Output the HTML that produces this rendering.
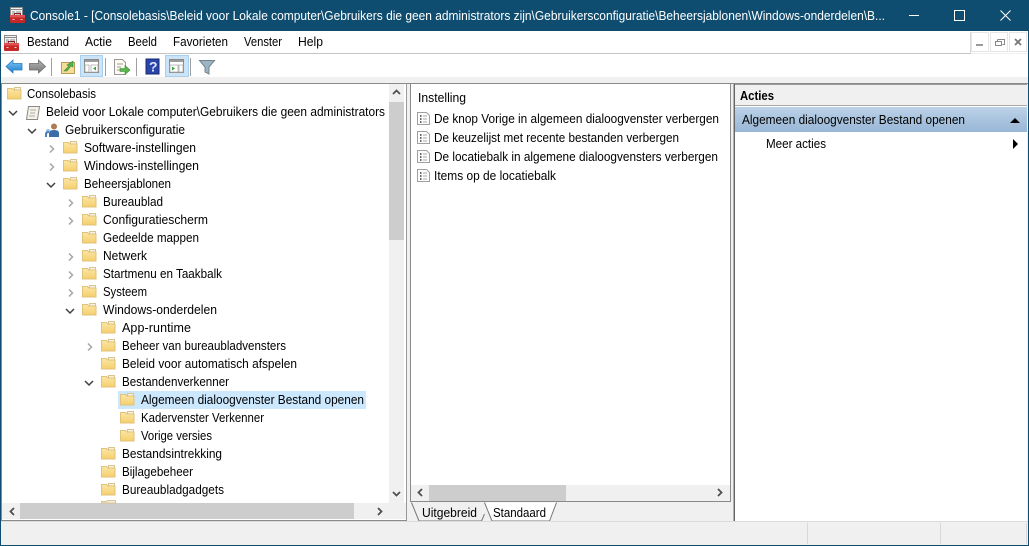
<!DOCTYPE html>
<html lang="nl"><head><meta charset="utf-8"><title>Console1</title>
<style>
html,body{margin:0;padding:0;width:1029px;height:546px;overflow:hidden;background:#f0f0f0}
svg{display:block}
text{font-family:"Liberation Sans",sans-serif;font-size:12.5px;fill:#000}
</style></head><body>
<svg xmlns="http://www.w3.org/2000/svg" width="1029" height="546" viewBox="0 0 1029 546">
<defs>
<linearGradient id="fg" x1="0" y1="0" x2="0" y2="1"><stop offset="0" stop-color="#fbe6a6"/><stop offset="1" stop-color="#f5cf6c"/></linearGradient>
<symbol id="f" viewBox="0 0 16 14" width="16" height="14" overflow="visible">
<path d="M8.500 2.500v-2h6v2" fill="#f6f1e2" stroke="#d8c48e"/>
<path d="M1.500 1.500h5l1.500 1.500h7v9h-13.500z" fill="url(#fg)" stroke="#e0c27a"/>
</symbol>
<symbol id="d" viewBox="0 0 14 16" width="14" height="16" overflow="visible">
<path d="M.5 1.500h9l3 3v9h-12z" fill="#fdfdfd" stroke="#a0a0a0"/>
<path d="M3 5h1.500M3 8h1.500M3 11h1.500" stroke="#333" stroke-width="1.400"/>
<path d="M6 5h4M6 8h4M6 11h4" stroke="#a8a8a8"/>
</symbol>
<symbol id="c" viewBox="0 0 8 10" width="8" height="10" overflow="visible"><path d="M2 1.500l3.500 3.500-3.500 3.500" fill="none" stroke="#a6a6a6" stroke-width="1.500"/></symbol>
<symbol id="o" viewBox="0 0 10 8" width="10" height="8" overflow="visible"><path d="M0 2l4 4 4-4" fill="none" stroke="#404040" stroke-width="1.500"/></symbol>
<linearGradient id="b" x1="0" y1="0" x2="0" y2="1"><stop offset="0" stop-color="#bcd2e8"/><stop offset="1" stop-color="#98b6d6"/></linearGradient>
<linearGradient id="bl" x1="0" y1="0" x2="0" y2="1"><stop offset="0" stop-color="#7cc6f4"/><stop offset="1" stop-color="#1f7fd0"/></linearGradient>
<linearGradient id="gr" x1="0" y1="0" x2="0" y2="1"><stop offset="0" stop-color="#b5b5b5"/><stop offset="1" stop-color="#777"/></linearGradient>
<symbol id="tb" viewBox="0 0 18 18" width="18" height="18" overflow="visible">
<rect x="1.500" y="1.500" width="14" height="13" fill="#fff" stroke="#8a8a8a"/>
<rect x="2" y="2" width="13" height="2" fill="#9c9c9c"/>
</symbol>
<symbol id="app" viewBox="0 0 16 16" width="16" height="16" overflow="visible">
<rect x="1.500" y="0.500" width="12" height="11" fill="#f2f2f2" stroke="#8c8c8c"/>
<path d="M2 2.500h11M3 5h3M7 5h5M3 7h3M7 7h5" stroke="#8a8a8a"/>
<rect x="1" y="8" width="15" height="8" rx="1" fill="#c62828"/>
<rect x="1" y="8" width="15" height="2.500" fill="#e05050"/>
<path d="M5.500 8v-1.500h6v1.500" fill="none" stroke="#8c2020"/>
<path d="M3.500 12.500h2M11.500 12.500h2" stroke="#f4caca"/>
</symbol>
</defs>

<!-- window frame and title bar -->
<rect width="1029" height="546" fill="#0f4d70"/>
<rect x="1" y="31" width="1027" height="514" fill="#f0f0f0"/>
<use href="#app" x="9" y="7"/>
<text x="30" y="20" textLength="855" lengthAdjust="spacingAndGlyphs" style="fill:#fff">Console1 - [Consolebasis\Beleid voor Lokale computer\Gebruikers die geen administrators zijn\Gebruikersconfiguratie\Beheersjablonen\Windows-onderdelen\B...</text>
<path d="M909 15.500h10" stroke="#fff"/>
<rect x="954.500" y="10.500" width="10" height="10" fill="none" stroke="#fff"/>
<path d="M1000.500 10.500l10 10M1010.500 10.500l-10 10" stroke="#fff"/>

<!-- menu bar -->
<rect x="1" y="31" width="1027" height="22" fill="#fff"/>
<rect x="1" y="53" width="970" height="1" fill="#c4c4c4"/>
<use href="#app" x="3" y="35"/>
<text x="27" y="46" textLength="42" lengthAdjust="spacingAndGlyphs">Bestand</text>
<text x="85" y="46" textLength="27" lengthAdjust="spacingAndGlyphs">Actie</text>
<text x="128" y="46" textLength="29" lengthAdjust="spacingAndGlyphs">Beeld</text>
<text x="173" y="46" textLength="55" lengthAdjust="spacingAndGlyphs">Favorieten</text>
<text x="244" y="46" textLength="38" lengthAdjust="spacingAndGlyphs">Venster</text>
<text x="298" y="46" textLength="25" lengthAdjust="spacingAndGlyphs">Help</text>
<!-- mdi buttons -->
<path d="M970.500 32v21.500" stroke="#d8d8d8"/>
<g fill="#fff" stroke="#e6e6e6"><rect x="971.500" y="32.500" width="17" height="19"/><rect x="990.500" y="32.500" width="17" height="19"/><rect x="1009.500" y="32.500" width="17" height="19"/></g>
<rect x="976" y="44" width="7" height="2" fill="#999"/>
<path d="M997.500 39.500h7v5h-2M995.500 41.500h6v4h-6zM997.500 39.500v2" fill="none" stroke="#888"/>
<path d="M1015 39l6 6M1021 39l-6 6" stroke="#777" stroke-width="1.800"/>

<!-- toolbar -->
<rect x="1" y="54" width="1027" height="23" fill="#fff"/>
<rect x="1" y="77" width="1027" height="6" fill="#f0f0f0"/>
<rect x="1" y="83" width="1027" height="1" fill="#8a8a8a"/>
<path d="M6 66.500l7-6.500v3.500h9v6.500h-9v3z" fill="url(#bl)" stroke="#2a7cbc" stroke-width=".8"/>
<path d="M45.500 66.500l-7-6.500v3.500h-9v6.500h9v3z" fill="url(#gr)" stroke="#6a6a6a" stroke-width=".8"/>
<path d="M51.500 58v18M105.500 58v18M136.500 58v18M190.500 58v18" stroke="#a0a0a0"/>
<path d="M61.500 62.500h13v11h-13z" fill="#f6dc94" stroke="#b89c5c"/>
<path d="M64 71l5-5-2-1 6-4v6l-2-1-4 5z" fill="#55b04c" stroke="#3c8a38" stroke-width=".6"/>
<rect x="80.500" y="55.500" width="22" height="21" fill="#cce4f7" stroke="#a8d0ee"/>
<use href="#tb" x="83" y="58"/>
<path d="M85 65h4v7h-4zM91 65h7v7h-7z" fill="#fff" stroke="#aaa" stroke-width=".8"/>
<path d="M96 66.500v4l-3-2z" fill="#3aa03a"/>
<path d="M114.500 59.500h8l3 3v12h-11z" fill="#fdfbf0" stroke="#999"/>
<path d="M117 64h6M117 67h4M117 70h4" stroke="#999"/>
<path d="M120 68.500h5v-3l5 4.500-5 4.500v-3h-5z" fill="#58b84a" stroke="#3c8a38" stroke-width=".6"/>
<rect x="146" y="59" width="13" height="15" fill="#2a45a8" stroke="#1a2878"/>
<text x="149" y="71.500" style="fill:#dfe6ff;font-weight:bold;font-size:14px">?</text>
<rect x="165.500" y="55.500" width="23" height="21" fill="#cce4f7" stroke="#a8d0ee"/>
<use href="#tb" x="168" y="58"/>
<path d="M170 65h8v7h-8zM179 65h4v7h-4z" fill="#fff" stroke="#aaa" stroke-width=".8"/>
<path d="M172 66.500v4l3-2z" fill="#3aa03a"/>
<path d="M199.500 60.500h15l-5.500 6.500v7l-4-2v-5z" fill="#9db4c2" stroke="#708490"/>

<!-- left pane -->
<rect x="1" y="84" width="405" height="437" fill="#fff"/>
<rect x="1" y="84" width="1" height="437" fill="#8a8a8a"/>
<rect x="406" y="84" width="1" height="437" fill="#9a9a9a"/>
<rect x="1" y="520" width="406" height="1" fill="#8a8a8a"/>
<!-- v scrollbar -->
<rect x="389" y="84" width="15" height="419" fill="#f0f0f0"/>
<rect x="389" y="102" width="15" height="138" fill="#cdcdcd"/>
<path d="M393 94l3.500-3.500 3.500 3.500" fill="none" stroke="#505050" stroke-width="1.800"/>
<path d="M393 492l3.500 3.500 3.500-3.500" fill="none" stroke="#505050" stroke-width="1.800"/>
<!-- h scrollbar -->
<rect x="2" y="503" width="404" height="16" fill="#f0f0f0"/>
<rect x="20" y="503" width="334" height="16" fill="#cdcdcd"/>
<path d="M14 508l-3.500 3.500 3.500 3.500" fill="none" stroke="#505050" stroke-width="1.800"/>
<path d="M378 508l3.500 3.500-3.500 3.500" fill="none" stroke="#505050" stroke-width="1.800"/>

<!-- tree -->
<rect x="118" y="391" width="248" height="18" fill="#cce8ff"/>
<g transform="translate(0,1)">
<use href="#f" x="6" y="86"/>
<text x="27" y="97" textLength="69" lengthAdjust="spacingAndGlyphs">Consolebasis</text>

<use href="#o" x="9" y="108"/>
<path d="M28.500 105.500h11l-2 13h-11z" fill="#f4f2e6" stroke="#888"/>
<path d="M30 109h6M30 112h5M29 115h6" stroke="#aaa"/>
<text x="46" y="115" textLength="339" lengthAdjust="spacingAndGlyphs">Beleid voor Lokale computer\Gebruikers die geen administrators</text>

<use href="#o" x="28" y="126"/>
<circle cx="54" cy="125.500" r="3" fill="#b07a50"/>
<path d="M49 136v-4q0-3 5-3t5 3v4z" fill="#3a6ea8"/>
<circle cx="48" cy="130" r="2" fill="#98c0e0"/>
<path d="M46 136v-3q0-2 3-2" fill="none" stroke="#4a80b8" stroke-width="2"/>
<text x="65" y="133" textLength="120" lengthAdjust="spacingAndGlyphs">Gebruikersconfiguratie</text>

<use href="#c" x="48" y="143"/><use href="#f" x="62" y="140"/>
<text x="84" y="151" textLength="112" lengthAdjust="spacingAndGlyphs">Software-instellingen</text>
<use href="#c" x="48" y="161"/><use href="#f" x="62" y="158"/>
<text x="84" y="169" textLength="115" lengthAdjust="spacingAndGlyphs">Windows-instellingen</text>
<use href="#o" x="47" y="180"/><use href="#f" x="62" y="176"/>
<text x="84" y="187" textLength="87" lengthAdjust="spacingAndGlyphs">Beheersjablonen</text>

<use href="#c" x="67" y="197"/><use href="#f" x="81" y="194"/>
<text x="103" y="205" textLength="60" lengthAdjust="spacingAndGlyphs">Bureaublad</text>
<use href="#c" x="67" y="215"/><use href="#f" x="81" y="212"/>
<text x="103" y="223" textLength="105" lengthAdjust="spacingAndGlyphs">Configuratiescherm</text>
<use href="#f" x="81" y="230"/>
<text x="103" y="241" textLength="96" lengthAdjust="spacingAndGlyphs">Gedeelde mappen</text>
<use href="#c" x="67" y="251"/><use href="#f" x="81" y="248"/>
<text x="103" y="259" textLength="44" lengthAdjust="spacingAndGlyphs">Netwerk</text>
<use href="#c" x="67" y="269"/><use href="#f" x="81" y="266"/>
<text x="103" y="277" textLength="119" lengthAdjust="spacingAndGlyphs">Startmenu en Taakbalk</text>
<use href="#c" x="67" y="287"/><use href="#f" x="81" y="284"/>
<text x="103" y="295" textLength="44" lengthAdjust="spacingAndGlyphs">Systeem</text>
<use href="#o" x="66" y="306"/><use href="#f" x="81" y="302"/>
<text x="103" y="313" textLength="114" lengthAdjust="spacingAndGlyphs">Windows-onderdelen</text>

<use href="#f" x="100" y="320"/>
<text x="122" y="331" textLength="69" lengthAdjust="spacing">App-runtime</text>
<use href="#c" x="86" y="341"/><use href="#f" x="100" y="338"/>
<text x="122" y="349" textLength="164" lengthAdjust="spacingAndGlyphs">Beheer van bureaubladvensters</text>
<use href="#f" x="100" y="356"/>
<text x="122" y="367" textLength="175" lengthAdjust="spacingAndGlyphs">Beleid voor automatisch afspelen</text>
<use href="#o" x="85" y="378"/><use href="#f" x="100" y="374"/>
<text x="122" y="385" textLength="107" lengthAdjust="spacingAndGlyphs">Bestandenverkenner</text>

<use href="#f" x="119" y="392"/>
<text x="141" y="403" textLength="223" lengthAdjust="spacingAndGlyphs">Algemeen dialoogvenster Bestand openen</text>
<use href="#f" x="119" y="410"/>
<text x="141" y="421" textLength="123" lengthAdjust="spacingAndGlyphs">Kadervenster Verkenner</text>
<use href="#f" x="119" y="428"/>
<text x="141" y="439" textLength="71" lengthAdjust="spacingAndGlyphs">Vorige versies</text>

<use href="#f" x="100" y="446"/>
<text x="122" y="457" textLength="100" lengthAdjust="spacingAndGlyphs">Bestandsintrekking</text>
<use href="#f" x="100" y="464"/>
<text x="122" y="475" textLength="71" lengthAdjust="spacingAndGlyphs">Bijlagebeheer</text>
<use href="#f" x="100" y="482"/>
<text x="122" y="493" textLength="102" lengthAdjust="spacingAndGlyphs">Bureaubladgadgets</text>
</g>
<path d="M101.500 503v-1.500h5l1-1h8v2.500z" fill="#f6f1e2" stroke="#d8c48e"/>

<!-- middle pane -->
<rect x="410" y="84" width="320" height="418" fill="#fff"/>
<rect x="410" y="84" width="1" height="418" fill="#8a8a8a"/>
<rect x="730" y="84" width="1" height="418" fill="#8a8a8a"/>
<rect x="410" y="501" width="321" height="1" fill="#8a8a8a"/>
<text x="418" y="102" textLength="48" lengthAdjust="spacingAndGlyphs">Instelling</text>
<use href="#d" x="417" y="111"/>
<text x="434" y="123" textLength="285" lengthAdjust="spacingAndGlyphs">De knop Vorige in algemeen dialoogvenster verbergen</text>
<use href="#d" x="417" y="130"/>
<text x="434" y="142" textLength="245" lengthAdjust="spacingAndGlyphs">De keuzelijst met recente bestanden verbergen</text>
<use href="#d" x="417" y="149"/>
<text x="434" y="161" textLength="284" lengthAdjust="spacingAndGlyphs">De locatiebalk in algemene dialoogvensters verbergen</text>
<use href="#d" x="417" y="168"/>
<text x="434" y="180" textLength="122" lengthAdjust="spacingAndGlyphs">Items op de locatiebalk</text>
<rect x="411" y="485" width="319" height="16" fill="#f0f0f0"/>
<rect x="429" y="485" width="137" height="16" fill="#cdcdcd"/>
<path d="M422 489l-3.500 3.500 3.500 3.500" fill="none" stroke="#505050" stroke-width="1.800"/>
<path d="M718 489l3.500 3.500-3.500 3.500" fill="none" stroke="#505050" stroke-width="1.800"/>

<!-- tabs -->
<path d="M411.500 502.500l7.500 18.500h62.500l3-7" fill="#f0f0f0" stroke="#777"/>
<path d="M484.500 502.500l7.500 18.500h57.500l7-18.500" fill="#fff" stroke="#777"/>
<text x="422" y="517" textLength="55" lengthAdjust="spacingAndGlyphs">Uitgebreid</text>
<text x="493" y="517" textLength="53" lengthAdjust="spacingAndGlyphs">Standaard</text>

<!-- right pane -->
<rect x="734" y="84" width="293" height="437" fill="#fff"/>
<rect x="733" y="84" width="1" height="437" fill="#b0b0b0"/>
<rect x="734" y="84" width="1" height="437" fill="#666"/>
<rect x="735" y="84" width="292" height="21" fill="#f0f0f0"/>
<rect x="735" y="84" width="292" height="1" fill="#9a9a9a"/>
<rect x="735" y="105" width="292" height="1" fill="#a8a8a8"/>
<rect x="735" y="107" width="292" height="25" fill="url(#b)"/>
<text x="740" y="100" textLength="34" lengthAdjust="spacingAndGlyphs" style="font-weight:bold">Acties</text>
<text x="742" y="124" textLength="223" lengthAdjust="spacingAndGlyphs">Algemeen dialoogvenster Bestand openen</text>
<path d="M1010 123l5-5 5 5z" fill="#000"/>
<text x="766" y="148" textLength="60" lengthAdjust="spacingAndGlyphs">Meer acties</text>
<path d="M1013 139l5 5-5 5z" fill="#000"/>

<!-- status bar -->
<rect x="1" y="521" width="1027" height="1" fill="#dcdcdc"/>
<path d="M807.500 523v21M940.500 523v21M1026.500 523v21" stroke="#d8d8d8"/>
<rect x="0" y="545" width="1029" height="1" fill="#0f4d70"/>
</svg>
</body></html>
